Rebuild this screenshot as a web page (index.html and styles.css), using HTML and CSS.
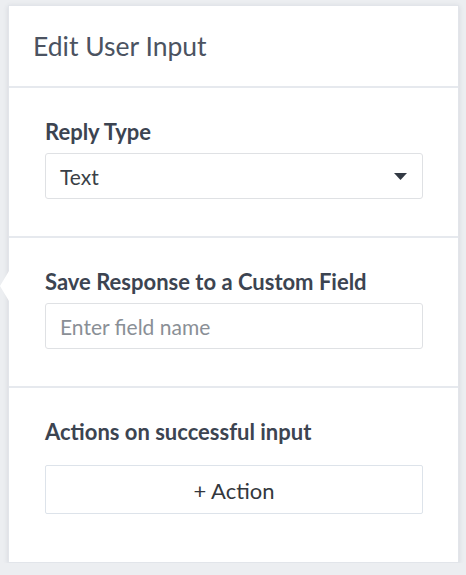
FILE: index.html
```html
<!DOCTYPE html>
<html>
<head>
<meta charset="utf-8">
<link rel="stylesheet" href="styles.css">
</head>
<body>
<div class="card">
  <div class="notch"></div>
  <div class="card-header">Edit User Input</div>
  <div class="section">
    <div class="label">Reply Type</div>
    <div class="select">
      <span>Text</span>
      <svg class="caret" width="13" height="7" viewBox="0 0 13 7"><path d="M0 0 L13 0 L6.5 7 Z" fill="#333a44"/></svg>
    </div>
  </div>
  <div class="section">
    <div class="label">Save Response to a Custom Field</div>
    <div class="input"><span class="placeholder">Enter field name</span></div>
  </div>
  <div class="section last">
    <div class="label">Actions on successful input</div>
    <div class="button">+ Action</div>
  </div>
</div>
</body>
</html>
```
FILE: styles.css
```css
html, body {
  margin: 0;
  padding: 0;
}
body {
  background: #eceef1;
  font-family: Lato, "Open Sans", sans-serif;
  padding: 5px 7px 0 8px;
}
.card {
  position: relative;
  background: #fff;
  border: 1px solid #e2e5ea;
  box-shadow: 0 1px 5px rgba(40, 50, 70, 0.12);
  height: 556px;
  box-sizing: content-box;
}
.notch {
  position: absolute;
  left: -9px;
  top: 265px;
  width: 0;
  height: 0;
  border-top: 15px solid transparent;
  border-bottom: 15px solid transparent;
  border-right: 9px solid #fff;
}
.card-header {
  height: 82px;
  border-bottom: 2px solid #e6e9ee;
  box-sizing: border-box;
  display: flex;
  align-items: center;
  padding-left: 24px;
  font-size: 26.5px;
  color: #4b5361;
}
.section {
  padding: 31px 35px 0 36px;
  border-bottom: 2px solid #e6e9ee;
  height: 150px;
  box-sizing: border-box;
}
.section.last {
  border-bottom: none;
  height: 174px;
}
.label {
  font-size: 22px;
  font-weight: bold;
  color: #3c4451;
  line-height: 26px;
  margin-bottom: 8px;
}
.last .label {
  margin-bottom: 20px;
}
.select, .input {
  height: 46px;
  border: 1px solid #dfe1e4;
  border-radius: 3px;
  box-sizing: border-box;
  display: flex;
  align-items: center;
  padding: 0 15px 0 14px;
  font-size: 21px;
  color: #3a3f47;
}
.select span {
  flex: 1;
}
.placeholder {
  color: #8a8f96;
}
.button {
  height: 49px;
  border: 1px solid #dde3ea;
  border-radius: 2px;
  box-sizing: border-box;
  display: flex;
  align-items: center;
  justify-content: center;
  padding-top: 2px;
  font-size: 22px;
  color: #33373d;
}
```
